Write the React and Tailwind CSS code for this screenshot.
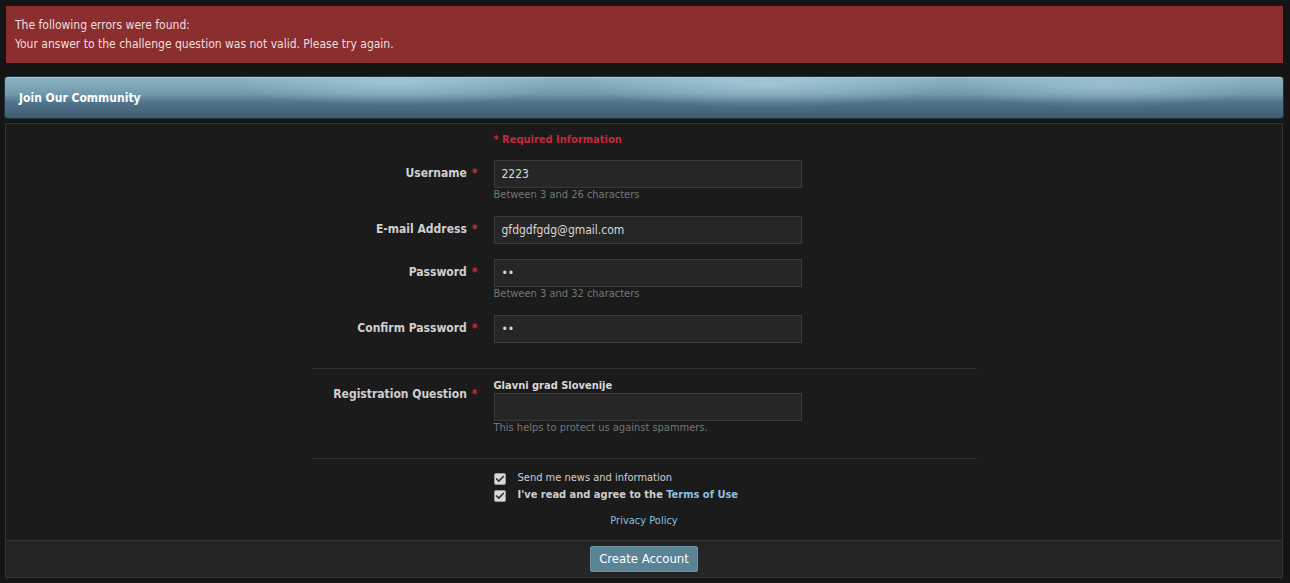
import { Check } from "lucide-react";

const font = "font-['Tahoma','DejaVu_Sans_Condensed','DejaVu_Sans',sans-serif]";

function Req() {
  return <span className="ml-[5px] text-[#c8323c]">*</span>;
}

function Field({ label, value, hint, question, className = "" }) {
  return (
    <div className={`flex ${className}`}>
      <div className={`w-[182px] pr-[16px] text-right text-[12px] font-bold text-[#cfcfcf] ${question ? "pt-[6px]" : "pt-[4px]"}`}>
        {label}
        <Req />
      </div>
      <div className="flex-1">
        {question && <div className="h-[14px] text-[11px] font-bold leading-[14px] text-[#d8d8d8]">{question}</div>}
        <div className="flex h-[28px] w-[308px] items-center border border-[#3a3a3a] bg-[#262626] px-[7px] text-[12px] text-[#d8d8d8]">
          {value}
        </div>
        {hint && <div className="h-[14px] text-[11px] leading-[14px] text-[#767676]">{hint}</div>}
      </div>
    </div>
  );
}

function Box() {
  return (
    <span className="flex h-[12px] w-[12px] items-center justify-center rounded-[2px] border border-[#9a9a9a] bg-[#d9d9d9]">
      <Check size={10} strokeWidth={4} className="text-[#333]" />
    </span>
  );
}

export default function App() {
  return (
    <div className={`${font} min-h-[583px] bg-[#151515] pt-[6px] pr-[7px] pl-[5px] text-[#cfcfcf]`}>
      <div className="ml-[1px] h-[57px] bg-[#8a2e30] px-[9px] pt-[10px] text-[12px] leading-[19px] text-[#f2dede]">
        <div>The following errors were found:</div>
        <div>Your answer to the challenge question was not valid. Please try again.</div>
      </div>

      <div className="mt-[14px] flex h-[41px] items-center rounded-[3px] border-t border-[#a8d0dc] bg-[radial-gradient(ellipse_160px_22px_at_390px_6px,rgba(190,225,235,0.45),transparent),radial-gradient(ellipse_180px_24px_at_760px_6px,rgba(190,225,235,0.5),transparent),radial-gradient(ellipse_150px_22px_at_1100px_8px,rgba(190,225,235,0.4),transparent),linear-gradient(180deg,#8cb3c3_0%,#7199ac_40%,#4f7389_62%,#3f5d73_100%)] px-[14px] text-[12px] font-bold text-white shadow-[0_0_0_1px_#1f3340]">
        Join Our Community
      </div>

      <div className="mt-[5px] border border-[#333] bg-[#1b1b1b]">
        <div className="mx-auto w-[665px] pt-[8px] pb-[10px]">
          <div className="flex">
            <div className="w-[182px]" />
            <div className="text-[11px] font-bold leading-[16px] text-[#c22a3c]">* Required Information</div>
          </div>

          <Field className="mt-[12px]" label="Username" value="2223" hint="Between 3 and 26 characters" />
          <Field className="mt-[14px]" label="E-mail Address" value="gfdgdfgdg@gmail.com" />
          <Field className="mt-[15px]" label="Password" value="••" hint="Between 3 and 32 characters" />
          <Field className="mt-[14px]" label="Confirm Password" value="••" />

          <div className="mt-[25px] border-t border-[#2e2e2e]" />

          <Field className="mt-[10px]" question="Glavni grad Slovenije" label="Registration Question" hint="This helps to protect us against spammers." />

          <div className="mt-[23px] border-t border-[#2e2e2e]" />

          <div className="mt-[11px] flex">
            <div className="w-[182px]" />
            <div className="flex-1 text-[11px]">
              <div className="flex h-[17px] items-center gap-[12px]">
                <Box />
                <span className="text-[#cfcfcf]">Send me news and information</span>
              </div>
              <div className="flex h-[17px] items-center gap-[12px]">
                <Box />
                <span className="font-bold text-[#cfcfcf]">
                  I've read and agree to the <span className="text-[#8cc0e0]">Terms of Use</span>
                </span>
              </div>
            </div>
          </div>
          <div className="mt-[9px] text-center text-[11px] text-[#8cc0e0]">Privacy Policy</div>
        </div>

        <div className="flex h-[37px] items-center justify-center border-t border-[#363636] bg-[#252525]">
          <button className="h-[26px] w-[108px] rounded-[2px] border border-[#6c93a5] bg-[#5a8396] text-[13px] text-white">
            Create Account
          </button>
        </div>
      </div>
    </div>
  );
}
